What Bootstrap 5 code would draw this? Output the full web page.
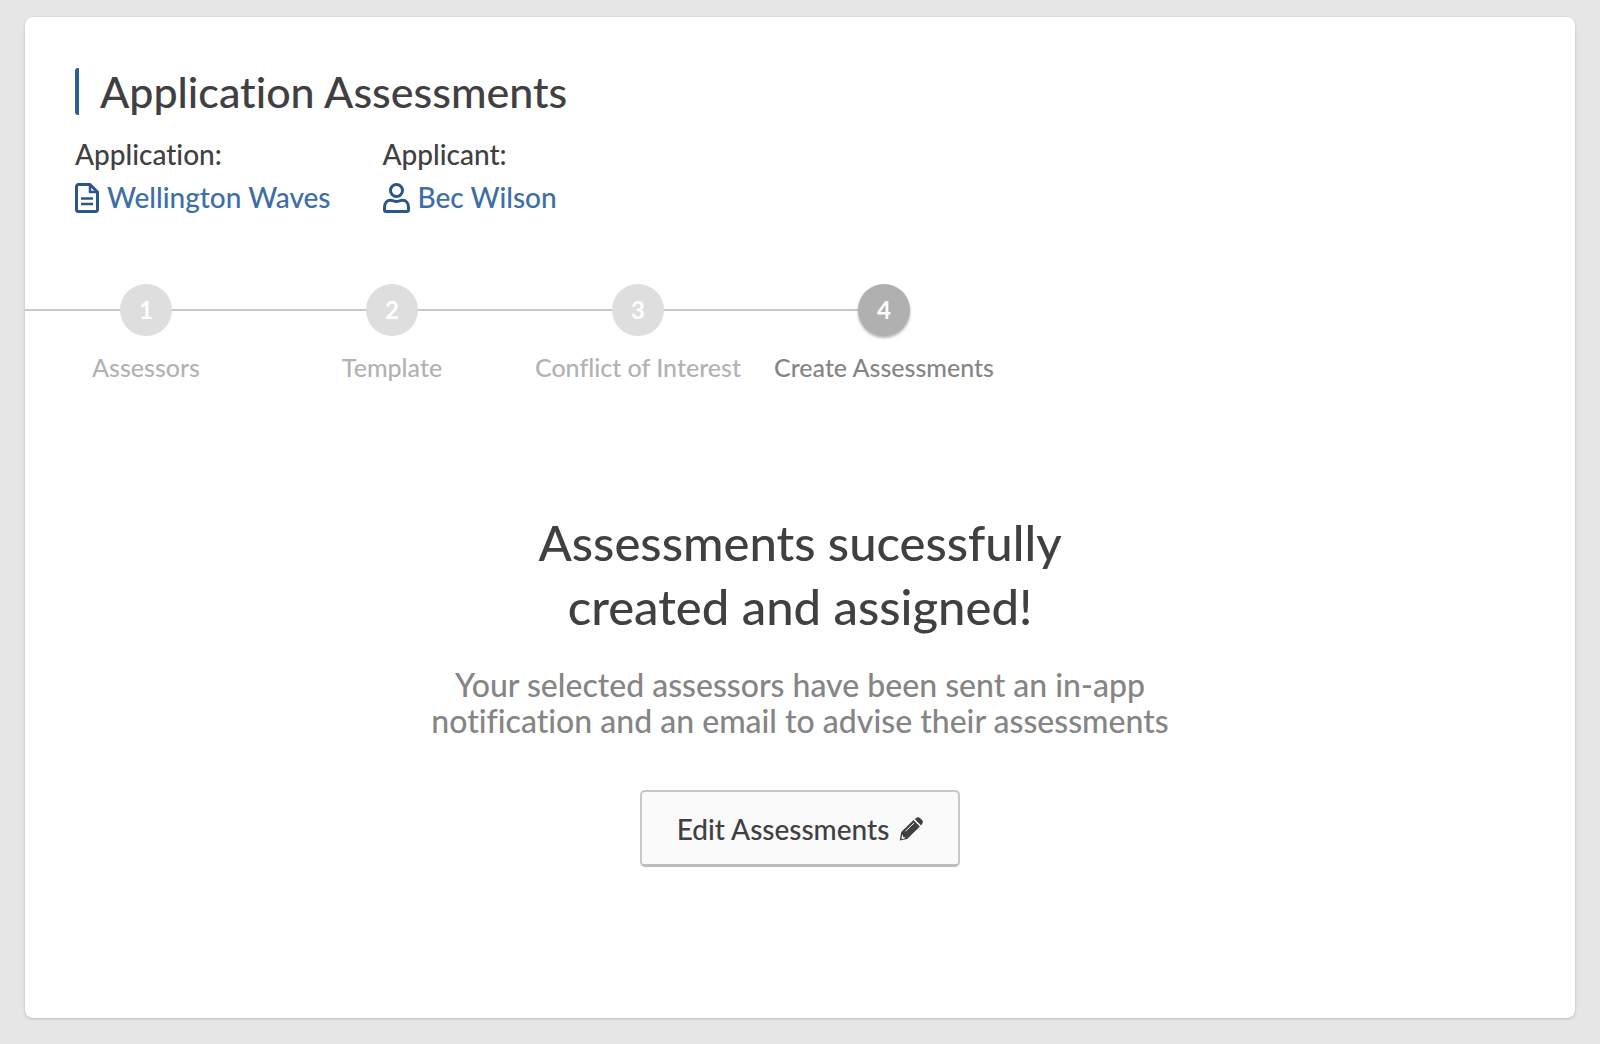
<!DOCTYPE html>
<html lang="en">
<head>
<meta charset="utf-8">
<meta name="viewport" content="width=device-width, initial-scale=1">
<title>Application Assessments</title>
<link href="https://cdn.jsdelivr.net/npm/bootstrap@5.3.0/dist/css/bootstrap.min.css" rel="stylesheet">
<style>
  body { background: #e6e6e6; color: #404042; font-family: Lato, "Open Sans", sans-serif; font-weight: 500; font-size: 28px; font-variant-ligatures: none; }
  .page-pad { padding: 17px 25px 26px; }
  .panel { border-radius: 8px; box-shadow: 0 1px 3px rgba(0,0,0,.2); padding-top: 51px; }
  .panel-head { padding: 0 50px; }
  .page-title { font-size: 43px; line-height: 47px; font-weight: 500; margin-bottom: 18px; padding-left: 21px; border-left: 4px solid #2a5f95; border-radius: 3px; }
  .meta-list { column-gap: 52px; }
  .meta-item { line-height: 43px; }
  .meta-item a { color: #3d6ea8; gap: 8px; }
  .meta-item svg { color: #2a5788; }
  .stepper { padding-top: 65px; margin-left: -2px; }
  .step { width: 246px; color: #b2b2b2; font-size: 25px; line-height: 30px; }
  .step-track { height: 52px; background: linear-gradient(#c8c8c8, #c8c8c8) 0 25px / 100% 2px no-repeat; }
  .step-dot { width: 52px; height: 52px; background: #dedede; font-size: 24px; font-weight: 700; }
  .step.current { color: #858585; }
  .step.current .step-track { background-size: 50% 2px; }
  .step.current .step-dot { background: #b0b0b0; box-shadow: 0 2px 3px rgba(0,0,0,.3); }
  .result { padding: 128px 24px 151px; }
  .result h2 { font-size: 49px; line-height: 64px; font-weight: 500; max-width: 620px; margin-bottom: 29px; }
  .result p { font-size: 32px; line-height: 36px; color: #858585; max-width: 760px; margin-bottom: 51px; }
  .btn-edit { --bs-btn-color: #404042; --bs-btn-bg: #fafafa; --bs-btn-border-color: #c8c8c8; --bs-btn-hover-bg: #f2f2f2; --bs-btn-hover-border-color: #bbb;
    border-width: 2px; border-bottom: 3px solid #bdbdbd; border-radius: 5px; font-size: 28px; font-weight: 500; line-height: 42px; padding: 16px 35px 14px; gap: 10px; }
</style>
<script src="https://cdn.jsdelivr.net/npm/bootstrap@5.3.0/dist/js/bootstrap.bundle.min.js" defer></script>
</head>
<body>
<main class="page-pad">
  <section class="panel bg-white overflow-hidden">
    <header class="panel-head">
      <h1 class="page-title">Application Assessments</h1>
      <div class="d-flex flex-wrap meta-list">
        <div class="meta-item">
          <div>Application:</div>
          <a href="#" class="d-flex align-items-center text-decoration-none">
            <svg width="24" height="30" viewBox="0 0 24 30" fill="none" stroke="currentColor" stroke-width="3" stroke-linejoin="round" aria-hidden="true"><path d="M3.500 1.500H15L22.500 9V26.500a2 2 0 0 1-2 2h-17a2 2 0 0 1-2-2v-23a2 2 0 0 1 2-2z"/><path d="M15 2v7h7" stroke-width="2.500"/><path d="M6 15.500h12M6 21h12" stroke-width="2.600"/></svg>
            Wellington Waves
          </a>
        </div>
        <div class="meta-item">
          <div>Applicant:</div>
          <a href="#" class="d-flex align-items-center text-decoration-none">
            <svg width="27" height="30" viewBox="0 0 27 30" fill="none" stroke="currentColor" stroke-width="3" stroke-linejoin="round" aria-hidden="true"><circle cx="13.500" cy="7.500" r="6"/><path d="M1.500 24.500c0-4.500 2.500-7.300 6-7.300 2.500 0 3.500 1.200 6 1.200s3.500-1.200 6-1.200c3.500 0 6 2.800 6 7.300v2.500a1.500 1.500 0 0 1-1.500 1.500H3A1.500 1.500 0 0 1 1.500 27z"/></svg>
            Bec Wilson
          </a>
        </div>
      </div>
    </header>

    <ol class="stepper list-unstyled d-flex text-center mb-0">
      <li class="step"><div class="step-track d-flex justify-content-center mb-3"><span class="step-dot rounded-circle text-white d-flex align-items-center justify-content-center">1</span></div>Assessors</li>
      <li class="step"><div class="step-track d-flex justify-content-center mb-3"><span class="step-dot rounded-circle text-white d-flex align-items-center justify-content-center">2</span></div>Template</li>
      <li class="step"><div class="step-track d-flex justify-content-center mb-3"><span class="step-dot rounded-circle text-white d-flex align-items-center justify-content-center">3</span></div>Conflict of Interest</li>
      <li class="step current" aria-current="step"><div class="step-track d-flex justify-content-center mb-3"><span class="step-dot rounded-circle text-white d-flex align-items-center justify-content-center">4</span></div>Create Assessments</li>
    </ol>

    <div class="result text-center d-flex flex-column align-items-center">
      <h2>Assessments sucessfully<br>created and assigned!</h2>
      <p>Your selected assessors have been sent an in-app notification and an email to advise their assessments</p>
      <button type="button" class="btn btn-edit d-flex align-items-center">Edit Assessments
        <svg width="24" height="24" viewBox="0 0 24 24" aria-hidden="true"><path fill="currentColor" d="M15.800 2 18 .5q1.500-.8 3 .6l2 2q1.500 1.500.5 3.200L22 8.500z M14.500 3l6.400 6.600L8.200 22 .7 23.500 2.200 15z"/><path d="M15 6 6.500 14.200" stroke="#fafafa" stroke-width="1" fill="none"/><path d="m3.800 17.500.4 2.400 2.300.5-1.500 1.300-2 .3-.6-.6.500-2.300z" fill="#fafafa"/></svg>
      </button>
    </div>
  </section>
</main>
</body>
</html>
